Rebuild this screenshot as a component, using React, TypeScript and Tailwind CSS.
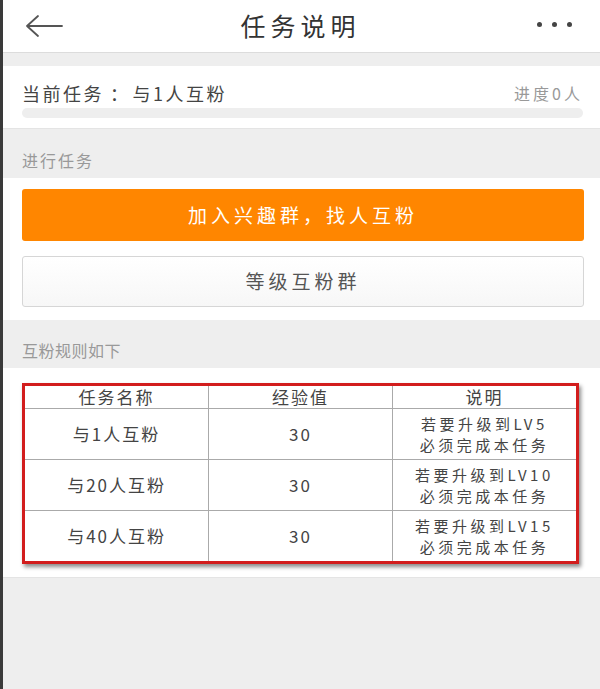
import React from "react";

interface RuleRow {
  name: string;
  exp: number;
  level: string;
}

const rules: RuleRow[] = [
  { name: "与1人互粉", exp: 30, level: "LV5" },
  { name: "与20人互粉", exp: 30, level: "LV10" },
  { name: "与40人互粉", exp: 30, level: "LV15" },
];

const font = {
  fontFamily: '"Noto Sans CJK SC", "Noto Sans", "Liberation Sans", sans-serif',
};

const BackArrow: React.FC = () => (
  <svg width="40" height="24" viewBox="0 0 40 24" fill="none">
    <path
      d="M38 12H3M14 2L3 12l11 10"
      stroke="#555"
      strokeWidth="1.8"
      strokeLinecap="round"
      strokeLinejoin="round"
    />
  </svg>
);

const SectionLabel: React.FC<{ children: React.ReactNode; wide?: boolean }> = ({
  children,
  wide,
}) => (
  <div
    className={`pl-[19px] text-[16px] leading-[22px] text-[#999] ${
      wide ? "tracking-[2px]" : "tracking-[0.5px]"
    }`}
  >
    {children}
  </div>
);

export default function App() {
  return (
    <div className="min-h-[689px] flex bg-[#eeeeee]" style={font}>
      <div className="w-[3px] bg-[#3a3a3a] shrink-0" />
      <div className="flex-1 flex flex-col">
        {/* header */}
        <div className="h-[53px] bg-white border-b border-[#dcdcdc] flex items-center justify-between pl-[21px] pr-[28px]">
          <BackArrow />
          <div className="text-[25px] tracking-[5px] text-[#333]">任务说明</div>
          <div className="flex gap-[10px] items-center pb-[4px]">
            <span className="w-[5px] h-[5px] rounded-full bg-[#444]" />
            <span className="w-[5px] h-[5px] rounded-full bg-[#444]" />
            <span className="w-[5px] h-[5px] rounded-full bg-[#444]" />
          </div>
        </div>

        <div className="h-[13px]" />

        {/* current task */}
        <div className="bg-white border-b border-[#e4e4e4] pt-[15px] pb-[10px] pl-[19px] pr-[17px]">
          <div className="flex justify-between items-center">
            <span className="text-[18px] leading-[24px] tracking-[2.5px] text-[#444]">
              当前任务<span className="pl-[6px] pr-[2px]">：</span>与1人互粉
            </span>
            <span className="text-[16px] leading-[24px] tracking-[3px] text-[#999]">进度0人</span>
          </div>
          <div className="mt-[3px] h-[10px] rounded-full bg-[#eeeeee]" />
        </div>

        <div className="pt-[20px] pb-[7px]">
          <SectionLabel wide>进行任务</SectionLabel>
        </div>

        {/* actions */}
        <div className="bg-white pt-[11px] pb-[13px] pl-[19px] pr-[16px] flex flex-col gap-[15px]">
          <button className="h-[52px] rounded-[3px] bg-[#ff8600] text-white text-[19px] tracking-[4px]">
            加入兴趣群，找人互粉
          </button>
          <button className="h-[51px] rounded-[3px] border border-[#d6d6d6] bg-gradient-to-b from-white to-[#f7f7f7] text-[#555] text-[19px] tracking-[4px]">
            等级互粉群
          </button>
        </div>

        <div className="pt-[19px] pb-[7px]">
          <SectionLabel>互粉规则如下</SectionLabel>
        </div>

        {/* rules table */}
        <div className="bg-white border-b border-[#e4e4e4] pt-[15px] pb-[13px] pl-[19px] pr-[21px]">
          <div className="border-[3px] border-[#d21d1d] shadow-[2px_3px_4px_rgba(0,0,0,0.45)]">
            <table className="w-full border-collapse table-fixed text-[#444] text-center">
              <thead>
                <tr className="h-[22px]">
                  <th className="font-normal text-[17px] leading-[20px] tracking-[2px] border-r border-b border-[#aaa]">
                    任务名称
                  </th>
                  <th className="font-normal text-[17px] leading-[20px] tracking-[2px] border-r border-b border-[#aaa]">
                    经验值
                  </th>
                  <th className="font-normal text-[17px] leading-[20px] tracking-[2px] border-b border-[#aaa]">
                    说明
                  </th>
                </tr>
              </thead>
              <tbody>
                {rules.map((r, i) => (
                  <tr key={r.name} className="h-[51px]">
                    <td
                      className={`text-[17px] tracking-[2px] border-r border-[#aaa] ${
                        i < rules.length - 1 ? "border-b" : ""
                      }`}
                    >
                      {r.name}
                    </td>
                    <td
                      className={`text-[17px] tracking-[2px] border-r border-[#aaa] ${
                        i < rules.length - 1 ? "border-b" : ""
                      }`}
                    >
                      {r.exp}
                    </td>
                    <td
                      className={`text-[15px] leading-[21px] tracking-[3.5px] border-[#aaa] ${
                        i < rules.length - 1 ? "border-b" : ""
                      }`}
                    >
                      <div>若要升级到{r.level}</div>
                      <div>必须完成本任务</div>
                    </td>
                  </tr>
                ))}
              </tbody>
            </table>
          </div>
        </div>
      </div>
    </div>
  );
}
